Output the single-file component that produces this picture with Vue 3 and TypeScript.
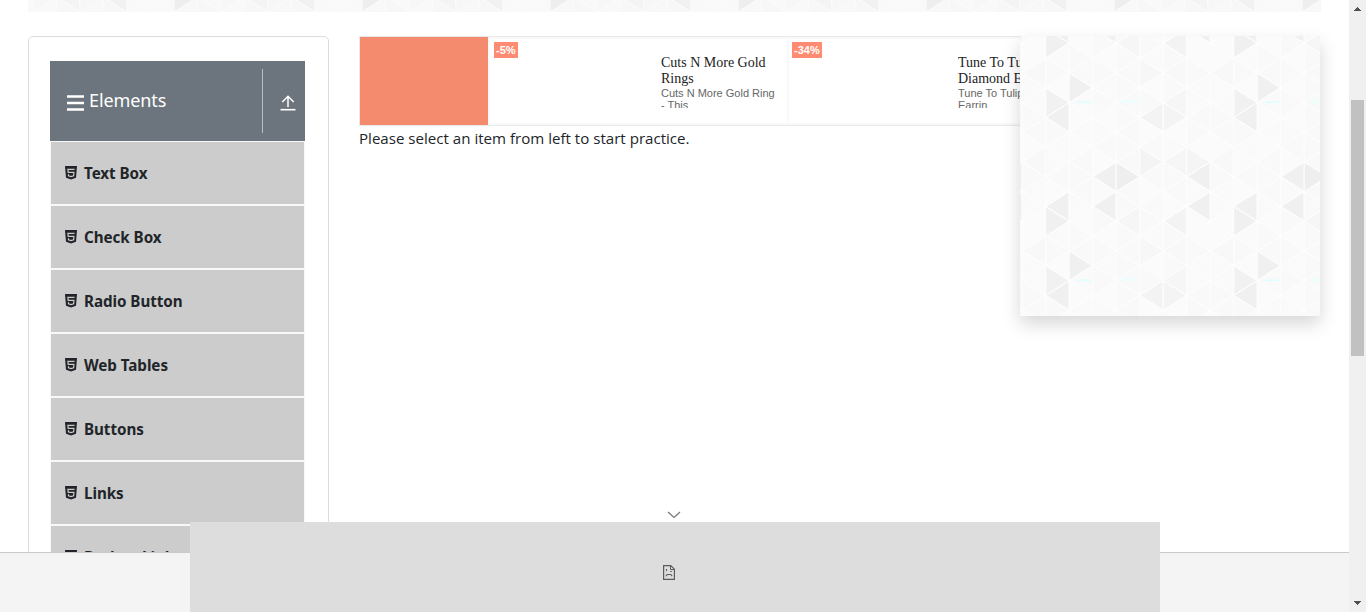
<script setup lang="ts">
interface Facet { points: string; fill: string }

const items: string[] = ['Text Box', 'Check Box', 'Radio Button', 'Web Tables', 'Buttons', 'Links', 'Broken Links - Images']

const COL = 23.5
const HALF = 178 / 12
const tones: Record<string, string> = {
  '1,0': '#f0f0f0', '6,0': '#f3f3f3', '4,0': '#f6f6f6', '2,3': '#f0f0f0', '1,4': '#f1f1f1',
  '1,5': '#f0f0f0', '5,5': '#f3f3f3', '6,5': '#f4f4f4', '6,4': '#f6f6f6', '3,9': '#f0f0f0',
  '4,9': '#eeeeee', '5,8': '#f4f4f4', '6,8': '#f6f6f6', '7,8': '#f5f5f5', '7,9': '#f0f0f0',
  '1,11': '#f0f0f0', '3,11': '#f0f0f0', '7,11': '#f0f0f0', '0,2': '#f8f8f8', '5,2': '#f7f7f7',
  '0,8': '#f8f8f8', '6,2': '#f8f8f8',
}
const soft = ['#fbfbfb', '#f9f9f9', '#fafafa', '#fbfbfb', '#f9f9f9', '#fafafa', '#f9f9f9']

const facets: Facet[] = []
for (let c = -1; c <= 8; c++) {
  for (let v = -2; v <= 13; v++) {
    const col = (c + 8) % 8
    const row = (v + 12) % 12
    const left = 2.2 + c * COL
    const right = left + COL
    const y = 7.3 + v * HALF
    const apexLeft = Math.abs(c % 2) === Math.abs(v % 2)
    const apex = apexLeft ? left : right
    const edge = apexLeft ? right : left
    facets.push({
      points: `${apex},${y} ${edge},${y - HALF} ${edge},${y + HALF}`,
      fill: tones[`${col},${row}`] ?? soft[(col * 5 + row * 3 + col * row) % 7],
    })
  }
}
</script>

<template>
  <div class="window">
    <div class="view">
      <svg class="strip" width="1293" height="12">
        <defs>
          <pattern id="facets-strip" width="188" height="178" patternUnits="userSpaceOnUse" patternTransform="translate(120.3 -10)">
            <polygon v-for="(f, i) in facets" :key="i" :points="f.points" :fill="f.fill" stroke="#fdfdfd" stroke-width="1.1" />
          </pattern>
        </defs>
        <rect width="1293" height="12" fill="url(#facets-strip)" />
        <rect width="1293" height="12" fill="#000" opacity=".008" />
      </svg>

      <div class="content">
        <aside class="card">
          <header class="group">
            <svg class="bars" width="17" height="16" viewBox="0 0 17 16"><path d="M0 1.5h17M0 8h17M0 14.5h17" stroke="#fff" stroke-width="2.6" /></svg>
            <span class="group-name">Elements</span>
            <span class="toggle">
              <svg width="16" height="16" viewBox="0 0 16 16" fill="none" stroke="#fff"><path d="M8 12V1.5M2.3 7 8 1.3 13.7 7" stroke-width="1.5" /><path d="M.5 14.7h15" stroke-width="1.6" /></svg>
            </span>
          </header>
          <ul class="menu">
            <li v-for="item in items" :key="item">
              <svg class="html5" width="12" height="14" viewBox="0 0 12 14"><path d="M0 0h12l-1 11.7L6 13.6 1 11.7z" fill="#212529" /><path d="M9.6 3.4H2.9l.3 3h5.7L8.6 9.7 6 10.5 3.5 9.7l-.1-1.4" fill="none" stroke="#ccc" stroke-width="1.2" /></svg>
              <span>{{ item }}</span>
            </li>
          </ul>
        </aside>

        <main>
          <div class="ad">
            <div class="brand"></div>
            <article class="product first">
              <b class="discount">-5%</b>
              <div class="copy"><h3>Cuts N More Gold<br />Rings</h3><p>Cuts N More Gold Ring<br />- This</p></div>
            </article>
            <article class="product">
              <b class="discount">-34%</b>
              <div class="copy"><h3>Tune To Tulip<br />Diamond Earrings</h3><p>Tune To Tulip Diamond<br />Earrin</p></div>
            </article>
          </div>
          <p class="hint">Please select an item from left to start practice.</p>
        </main>
      </div>

      <footer class="footer"></footer>

      <svg class="panel" width="300" height="280">
        <defs>
          <pattern id="facets-panel" width="188" height="178" patternUnits="userSpaceOnUse">
            <polygon v-for="(f, i) in facets" :key="i" :points="f.points" :fill="f.fill" stroke="#fdfdfd" stroke-width="1.1" />
            <ellipse cx="64" cy="66.3" rx="8" ry="1" fill="#d9ffff" opacity=".8" />
            <ellipse cx="110" cy="65.5" rx="10" ry="2" fill="#e9ffff" opacity=".6" />
          </pattern>
        </defs>
        <rect width="300" height="280" fill="url(#facets-panel)" />
      </svg>

      <svg class="chevron" width="14" height="8" viewBox="0 0 14 8"><path d="M1 1l6 5.5L13 1" fill="none" stroke="#777" stroke-width="1.2" /></svg>
      <div class="frame">
        <svg width="12" height="15" viewBox="0 0 12 15" fill="none" stroke="#5c5c5c"><path d="M.6.6h7.2l3.6 3.6v10.2H.6z" stroke-width="1.2" /><path d="M7.5.8v3.7h3.8" /><path d="M3.5 4v2M7.2 6.5h1.6M3.3 11.2V10.2l1-.7h3.4l1 .7v1" stroke-width="1.1" /></svg>
      </div>
    </div>

    <div class="scrollbar">
      <svg class="arrow" width="7" height="4"><path d="M0 4V3h1V2h1V1h1V0h1v1h1v1h1v1h1v1z" fill="#505050" /></svg>
      <div class="thumb"></div>
      <svg class="arrow down" width="7" height="4"><path d="M0 0v1h1v1h1v1h1v1h1V3h1V2h1V1h1V0z" fill="#505050" /></svg>
    </div>
  </div>
</template>

<style>
html, body { margin: 0; overflow: hidden; background: #fff; }
</style>

<style scoped>
* { box-sizing: border-box; }
.window { display: flex; width: 1366px; height: 612px; overflow: hidden; color: #212529; font-family: "Open Sans", "Noto Sans", sans-serif; }
.view { position: relative; display: flex; flex-direction: column; width: 1349px; height: 612px; overflow: hidden; }
.strip { display: block; flex: none; margin-left: 28px; }
.content { display: flex; gap: 30px; height: 540px; padding: 24px 28px 0; overflow: hidden; }
.card { flex: none; width: 301px; height: 620px; padding: 24px 23px 0 21px; border: 1px solid #dcdcdc; border-radius: 5px; }
.group { display: flex; align-items: center; width: 255px; height: 80px; padding-left: 17px; background: #6c757d; color: #fff; }
.bars { margin-top: 3px; }
.group-name { margin: -2px 0 0 5px; font-family: "Noto Sans", sans-serif; font-size: 18px; line-height: 26px; letter-spacing: -.1px; }
.toggle { display: flex; align-items: center; width: 43px; height: 64px; margin-left: auto; padding: 4px 0 0 17px; border-left: 1px solid #bcbcbc; }
.menu { width: 255px; margin: 0; padding: 0; list-style: none; background: #f8f8f8; }
.menu li { display: flex; align-items: center; height: 64px; padding-left: 14px; border: 1px solid #f8f8f8; background: #ccc; font-family: "Noto Sans", sans-serif; font-size: 15.2px; font-weight: 700; letter-spacing: -.05px; }
.menu li span { line-height: 22px; white-space: nowrap; }
.html5 { flex: none; margin-right: 7px; }
main { flex: none; width: 962px; }
.ad { display: flex; width: 728px; height: 90px; border: 1px solid #e9e9eb; border-right: 0; overflow: hidden; }
.brand { flex: none; width: 128px; background: #f58b6e; }
.product { display: flex; flex: none; width: 297px; padding: 5px 0 0 3px; border: 2px solid #f9f9f9; border-left-width: 0; }
.product.first { width: 301px; padding-left: 4px; border-left-width: 2px; }
.discount { flex: none; height: 16px; margin-top: -2px; padding: 0 2px; background: #ff8c72; color: #fff; font: 700 11px/16px "Liberation Sans", Arial, sans-serif; }
.product .copy { width: 126px; height: 54px; margin: 11px 0 0 auto; padding-bottom: 0; white-space: nowrap; overflow: hidden; }
.product .copy { height: 53px; }
.copy h3 { margin: 0; color: #222; font: 400 14px/16px "Liberation Serif", serif; }
.copy p { margin: 0; color: #666; font: 400 11px/12px "Liberation Sans", Arial, sans-serif; }
.hint { margin: 0; font-size: 15.1px; line-height: 24px; white-space: nowrap; }
.footer { flex: none; height: 60px; border-top: 1px solid #c9c9c9; background: #f4f4f4; }
.panel { position: absolute; top: 36px; left: 1020px; box-shadow: 0 8px 17px rgba(0, 0, 0, .16); }
.chevron { position: absolute; top: 511px; left: 667px; }
.frame { position: absolute; top: 522px; left: 190px; display: flex; justify-content: center; width: 970px; height: 90px; padding: 43px 12px 0 0; background: #ddd; }
.scrollbar { display: flex; flex-direction: column; align-items: center; width: 17px; height: 612px; padding: 7px 0; background: #f0f0f0; }
.arrow { display: block; flex: none; }
.thumb { flex: none; width: 13px; height: 256px; margin-top: 89px; margin-right: 1px; background: #c1c1c1; }
.down { margin-top: auto; }
</style>
